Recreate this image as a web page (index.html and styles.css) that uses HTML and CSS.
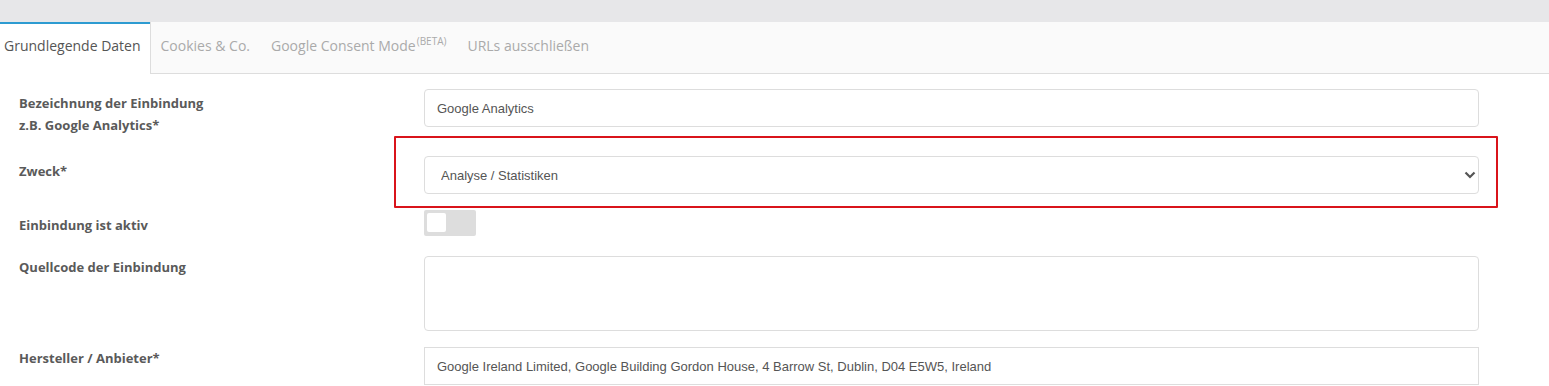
FILE: index.html
```html
<!DOCTYPE html>
<html lang="de">
<head>
  <meta charset="UTF-8">
  <title>Einbindung bearbeiten</title>
  <link rel="stylesheet" href="styles.css">
</head>
<body>
<div class="topbar"></div>
<ul class="tabs">
  <li class="active">Grundlegende Daten</li>
  <li class="rest">
    <ul>
      <li>Cookies &amp; Co.</li>
      <li>Google Consent Mode<sup>(BETA)</sup></li>
      <li>URLs ausschließen</li>
    </ul>
  </li>
</ul>
<form class="form">
  <div class="row row-name">
    <label>Bezeichnung der Einbindung<br>z.B. Google Analytics*</label>
    <input type="text" value="Google Analytics">
  </div>
  <div class="row row-purpose">
    <label>Zweck*</label>
    <div class="mark">
      <div class="select-wrap">
        <select>
          <option>Analyse / Statistiken</option>
        </select>
        <svg class="chevron" width="12" height="8" viewBox="0 0 12 8"><path d="M1.5 1.5 6 6l4.5-4.5" fill="none" stroke="#555" stroke-width="2.2"/></svg>
      </div>
    </div>
  </div>
  <div class="row row-active">
    <label>Einbindung ist aktiv</label>
    <div><span class="toggle"><span class="knob"></span></span></div>
  </div>
  <div class="row row-code">
    <label>Quellcode der Einbindung</label>
    <textarea></textarea>
  </div>
  <div class="row row-vendor">
    <label>Hersteller / Anbieter*</label>
    <input type="text" value="Google Ireland Limited, Google Building Gordon House, 4 Barrow St, Dublin, D04 E5W5, Ireland">
  </div>
</form>
</body>
</html>
```

FILE: styles.css
```css
body,div,ul,li,form{margin:0;padding:0;}
ul{list-style-type:none;}
body{background:#fff;font:14px/20px "Open Sans",Arial,sans-serif;color:#555;overflow:hidden;}
.topbar{height:22px;background:#e7e7e9;}

.tabs{display:flex;}
.tabs > li.active{padding:12px 9px 18px 4px;border-top:2px solid #2d9bd1;background:#fff;color:#555;}
.tabs .rest{flex:1;background:#fafafa;border-left:1px solid #ddd;border-bottom:1px solid #ddd;}
.tabs .rest ul{display:flex;}
.tabs .rest li{padding:14px 10px 17px 10px;color:#aaa;}
.tabs .rest li + li{margin-left:1px;}
.tabs sup{font-size:10px;line-height:0;vertical-align:6px;margin-left:1px;}

.form{width:1479px;}
.row{display:grid;grid-template-columns:424px 1055px;align-items:start;}
.row label{padding-left:19px;font-family:"Open Sans",sans-serif;font-weight:700;font-size:13px;line-height:22px;color:#5a5a5a;}
.row input,.row select,.row textarea{display:block;box-sizing:border-box;width:100%;margin:0;border:1px solid #ddd;border-radius:4px;background:#fff;font:13px "Liberation Sans",Arial,sans-serif;color:#555;outline:none;}
.row input{height:38px;padding:0 12px;}
.row-name{margin-top:15px;}
.row-name label{padding-top:3px;margin-bottom:-9px;}
.row-purpose{margin-top:9px;}
.row-purpose label{padding-top:24px;}
.mark{margin:0 -19px 0 -30px;padding:18px 17px 12px 28px;border:2px solid #d9141b;border-radius:1px;}
.select-wrap{position:relative;}
.row select{height:38px;padding:0 16px;appearance:none;-webkit-appearance:none;}
.chevron{position:absolute;right:3px;top:15px;}
.row-active{margin-top:2px;}
.row-active label{padding-top:4px;}
.toggle{display:block;width:52px;height:26px;box-sizing:border-box;padding:3px;background:#ddd;border-radius:2px;}
.knob{display:block;width:19px;height:19px;background:#fff;border-radius:2px;}
.row-code{margin-top:20px;}
.row textarea{height:75px;resize:none;}
.row-vendor{margin-top:16px;}
.row-vendor input{border-radius:0;}
```
